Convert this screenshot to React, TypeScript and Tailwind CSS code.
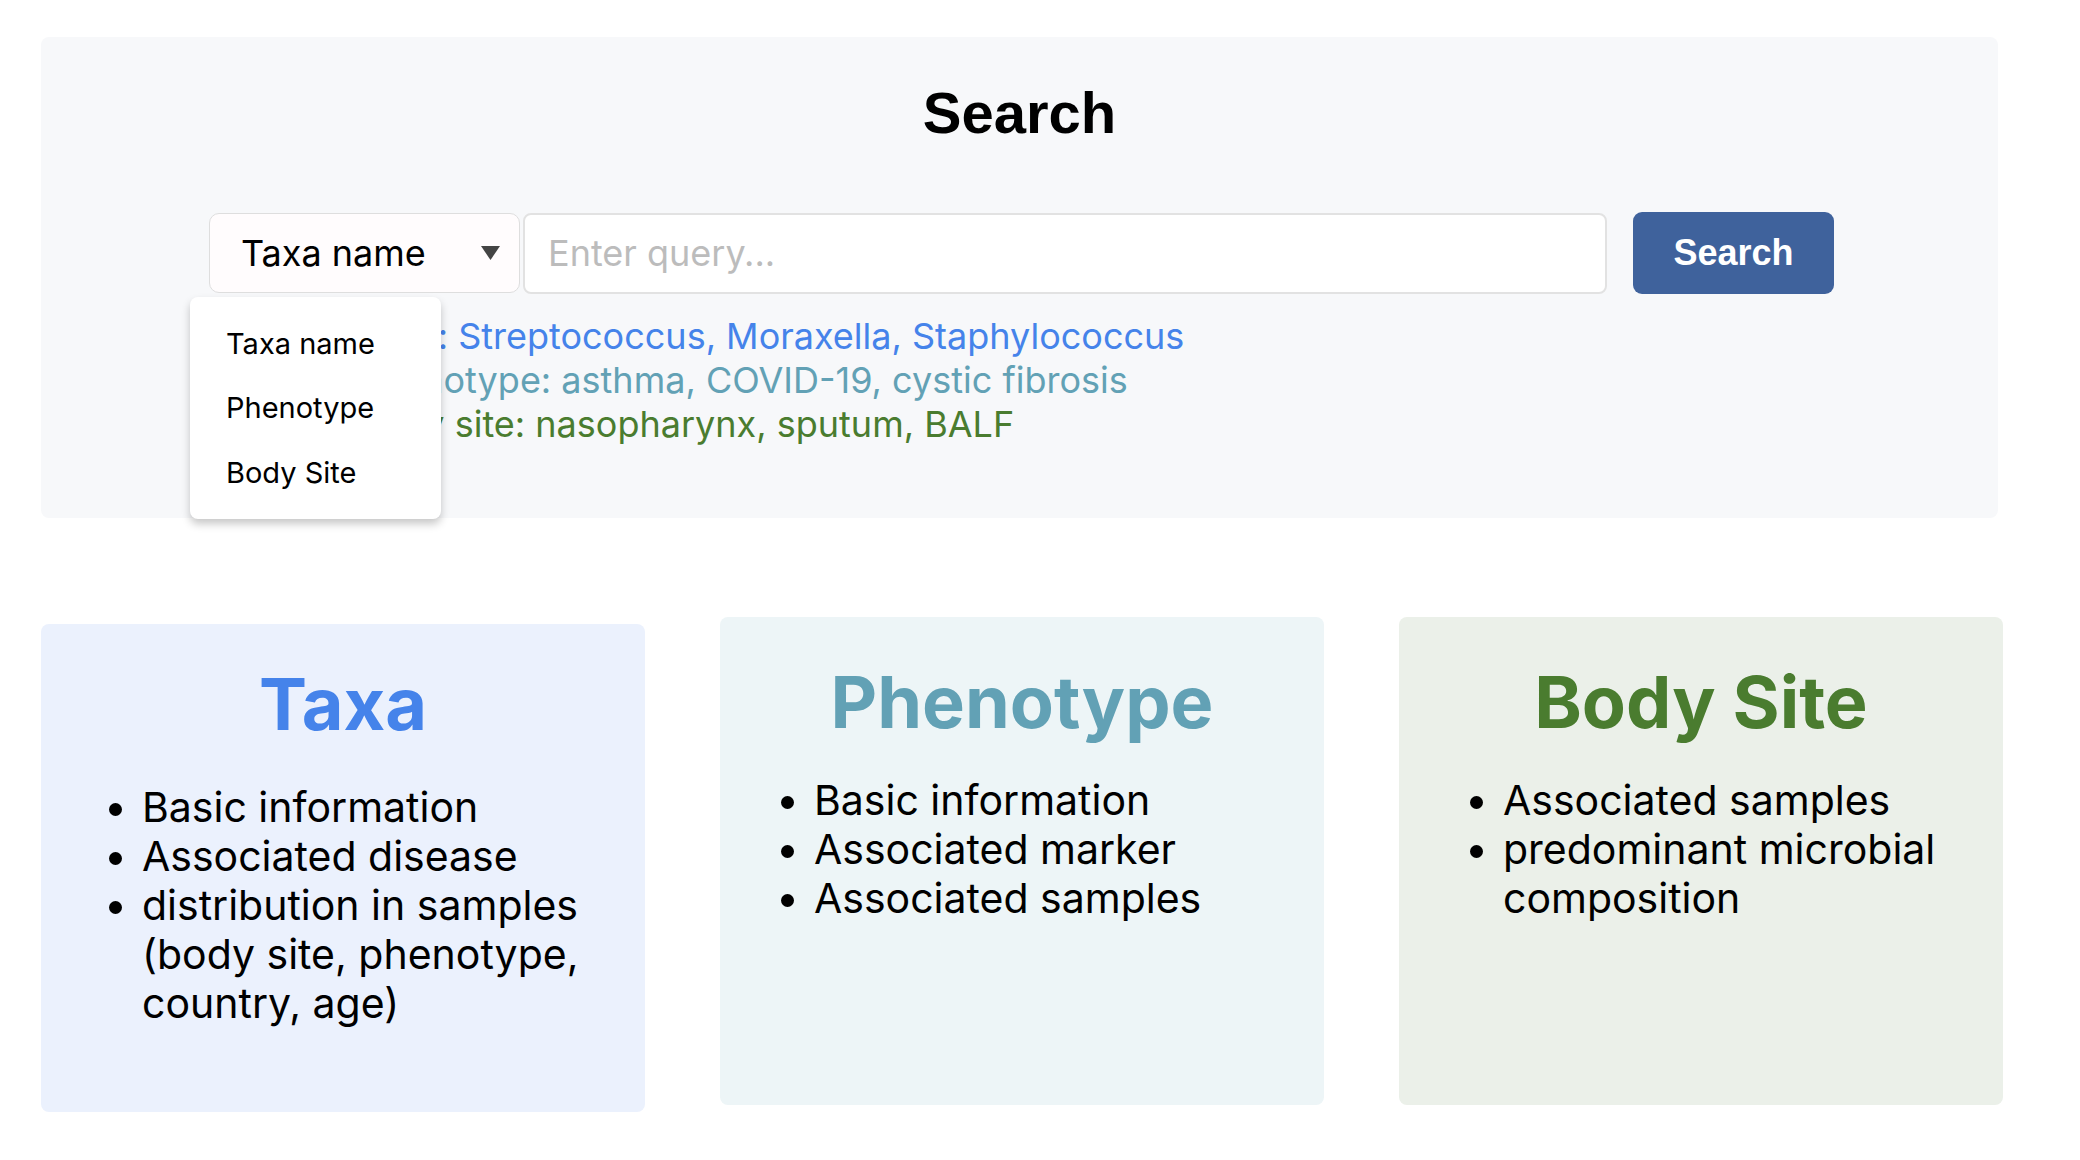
import React from "react";

const cards = [
  {
    title: "Taxa",
    color: "text-[#4583ea]",
    bg: "bg-[#ebf1fd]",
    box: "mt-[7px] pt-[36px]",
    list: "mt-[36px] pl-[101px]",
    items: ["Basic information", "Associated disease", "distribution in samples (body site, phenotype, country, age)"],
  },
  {
    title: "Phenotype",
    color: "text-[#62a1b5]",
    bg: "bg-[#edf5f7]",
    box: "pt-[41px]",
    list: "mt-[31px] pl-[94px]",
    items: ["Basic information", "Associated marker", "Associated samples"],
  },
  {
    title: "Body Site",
    color: "text-[#4a7c2f]",
    bg: "bg-[#ebf0e9]",
    box: "pt-[41px]",
    list: "mt-[31px] pl-[104px]",
    items: ["Associated samples", "predominant microbial composition"],
  },
];

export default function App() {
  return (
    <div className="min-h-screen bg-white pt-[37px] pl-[41px] font-['Inter',sans-serif] text-black">
      <div className="relative w-[1957px] h-[481px] rounded-[8px] bg-[#f7f8fa] pt-[42px]">
        <h1 className="text-center text-[58px] leading-[68px] font-bold font-['Liberation_Sans',Arial,sans-serif]">
          Search
        </h1>
        <div className="mt-[65px] flex items-center pl-[168px]">
          <div className="flex h-[80px] w-[311px] items-center justify-between rounded-[10px] border-[1.5px] border-[#dedede] bg-[#fffcfd] pl-[31px] pr-[19px]">
            <span className="text-[36px] leading-none">Taxa name</span>
            <svg width="19" height="14" viewBox="0 0 19 14">
              <path d="M0 0 H19 L9.5 14 Z" fill="#444" />
            </svg>
          </div>
          <input
            className="ml-[3px] h-[81px] w-[1084px] rounded-[8px] border-2 border-[#e2e2e2] bg-white pl-[23px] text-[36px] outline-none placeholder:text-[#bcbcbc]"
            placeholder="Enter query..."
          />
          <button className="ml-[26px] h-[82px] w-[201px] rounded-[9px] bg-[#3f629c] text-[36px] font-bold text-white font-['Liberation_Sans',Arial,sans-serif]">
            Search
          </button>
        </div>
        <div className="mt-[20px] pl-[316px] text-[36px] leading-[44px]">
          <div className="text-[#4583ea]">Taxa: Streptococcus, Moraxella, Staphylococcus</div>
          <div className="text-[#62a1b5]">Phenotype: asthma, COVID-19, cystic fibrosis</div>
          <div className="text-[#4a7c2f]">Body site: nasopharynx, sputum, BALF</div>
        </div>

        <div className="absolute left-[149px] top-[260px] w-[251px] rounded-[8px] bg-white py-[14px] shadow-[0_5px_8px_rgba(0,0,0,0.22)]">
          {["Taxa name", "Phenotype", "Body Site"].map((t) => (
            <div key={t} className="flex h-[64.5px] items-center pl-[36px] text-[29px]">
              {t}
            </div>
          ))}
        </div>
      </div>

      <div className="mt-[99px] grid w-[1962px] grid-cols-3 items-start gap-[75px]">
        {cards.map((c) => (
          <div key={c.title} className={`h-[488px] rounded-[8px] ${c.bg} ${c.box}`}>
            <h2 className={`text-center text-[72px] leading-[87px] font-bold ${c.color}`}>{c.title}</h2>
            <ul className={`list-disc pr-[30px] text-[41px] leading-[49px] ${c.list}`}>
              {c.items.map((i) => (
                <li key={i}>{i}</li>
              ))}
            </ul>
          </div>
        ))}
      </div>
    </div>
  );
}
